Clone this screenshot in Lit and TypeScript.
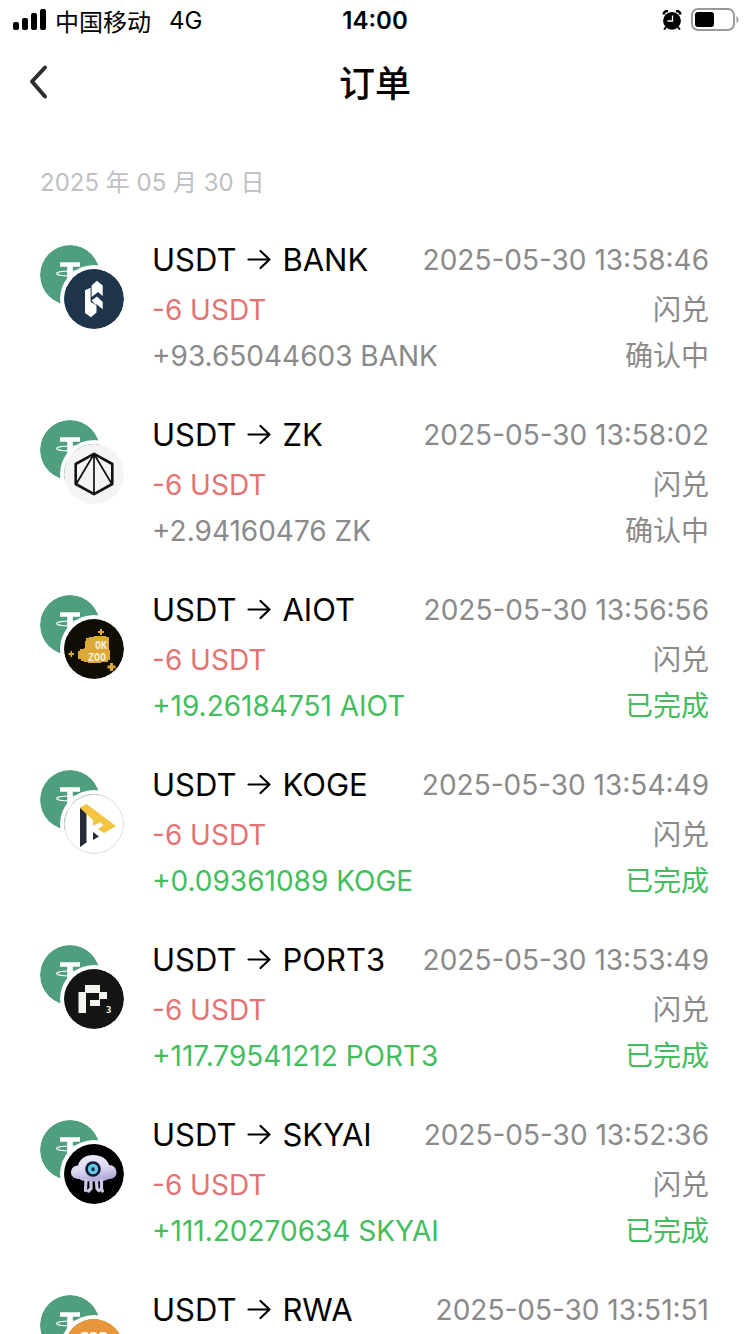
import { LitElement, html, css, svg } from 'lit';
import { customElement, property } from 'lit/decorators.js';

interface Order {
  token: string;
  time: string;
  received: string;
  done: boolean;
}

const orders: Order[] = [
  { token: 'BANK', time: '2025-05-30 13:58:46', received: '93.65044603', done: false },
  { token: 'ZK', time: '2025-05-30 13:58:02', received: '2.94160476', done: false },
  { token: 'AIOT', time: '2025-05-30 13:56:56', received: '19.26184751', done: true },
  { token: 'KOGE', time: '2025-05-30 13:54:49', received: '0.09361089', done: true },
  { token: 'PORT3', time: '2025-05-30 13:53:49', received: '117.79541212', done: true },
  { token: 'SKYAI', time: '2025-05-30 13:52:36', received: '111.20270634', done: true },
  { token: 'RWA', time: '2025-05-30 13:51:51', received: '', done: true },
];

const tokenArt: Record<string, unknown> = {
  BANK: svg`
    <circle cx="30" cy="30" r="30" fill="#1e354c"/>
    <path fill="#fff" d="M21 21.300l5.600-2.500V33l5.900 3.500v7L27 48.300 21 44z"/>
    <path fill="#fff" d="M27.600 16.500l5.400-4.800 5.700 4.800V27L34 23l-6.400 5z"/>
    <path fill="#fff" d="M27.600 31.500L33 27.500l5.700 5.500v7.200L33 35.500l-2 0z"/>`,
  ZK: svg`
    <circle cx="30" cy="30" r="30" fill="#f4f4f4"/>
    <path fill="none" stroke="#111" stroke-width="2.600" stroke-linejoin="round" d="M30 9.800l18.300 10.200v20L30 50.200 11.700 40V20z"/>
    <path fill="none" stroke="#111" stroke-width="1.700" d="M30 10v40M30 10L12.500 39.500M30 10l17.500 29.500"/>`,
  AIOT: svg`
    <circle cx="30" cy="30" r="30" fill="#100d05"/>
    <path fill="#dca836" d="M22 19h3v-1h5v-1h12v1h3v13h1v10h-2v2h-7v1H24v-1h-4v-1h-3v-2h-3v-8h2v-2h4v-1h1v-7h1z"/>
    <path fill="#dca836" d="M36 10h2v2h2v2h-2v2h-2v-2h-2v-2h2zM6.500 32h1.500v2h2v2h-2v2h-1.500v-2h-2v-2h2zM46 44h3v2.500h2.500v3H49V52h-3v-2.500h-2.500v-3H46z"/>
    <text class="pixel" x="31" y="30" font-size="10">OK</text>
    <text class="pixel" x="24" y="42" font-size="10">ZOO</text>`,
  KOGE: svg`
    <circle cx="30" cy="30" r="29.500" fill="#fff" stroke="#d8d8d8"/>
    <path fill="#262a33" d="M16 13.500l6.500 4v31L16 53zM29 38l6 4.500-6 3.500z"/>
    <path fill="#f3c43f" d="M16 13.500l6.500-3.500L52 32l-12 7-6-4 5.500-3.500-3-3-7.500 3v-5.500L16.500 14.500z"/>`,
  PORT3: svg`
    <circle cx="30" cy="30" r="30" fill="#141414"/>
    <path fill="#f3f5ee" d="M21 16h15v7h7v7h-7v7H26v-6h9v-7H22v20h-7.500V23H21z"/>
    <text class="pixel" x="42" y="44" font-size="9">3</text>`,
  SKYAI: svg`
    <defs>
      <linearGradient id="cloud" x1="0" y1="0" x2="0.300" y2="1">
        <stop offset="0" stop-color="#f1effb"/><stop offset="0.600" stop-color="#dcd9f3"/><stop offset="1" stop-color="#b3add9"/>
      </linearGradient>
    </defs>
    <circle cx="30" cy="30" r="30" fill="#000"/>
    <path fill="url(#cloud)" d="M14 21.500c1.500-6 7-10.500 15-10.500s14.500 4 16 10c4.500 0 7.500 3.500 7.500 7.500s-3 6.500-8 6.500c-3 2-8 2.500-15 2.500s-12-.5-14-2.500c-5 0-8.500-2.500-8.500-6.500s3-7 7-7z"/>
    <path fill="none" stroke="#cdc8ea" stroke-width="3.200" stroke-linecap="round" d="M22 36l-.5 10.500M27 38v6.500l-2.500 2.500M32.500 38l.5 6.500 2 2M37.500 36v9l1 2"/>
    <circle cx="29" cy="25" r="7.800" fill="#0d1b33"/>
    <circle cx="29" cy="25" r="5.200" fill="#63c7e6"/>
    <rect x="27.500" y="23.500" width="3" height="3.500" fill="#14304a"/>`,
  RWA: svg`
    <circle cx="30" cy="30" r="30" fill="#e8963c"/>
    <path fill="#fff" d="M14 22c0-6 3-9 7-9s4 2 4 9zM25 22c0-6 0-9 4-9s5 2 5 9zM35 22v-6c0-3 2-3 5-3s5 4 5 9z"/>`,
};

const tether = svg`
  <circle cx="30" cy="30" r="30" fill="#4f9f7f"/>
  <ellipse cx="30" cy="28.500" rx="13.500" ry="2.500" fill="none" stroke="#fff" stroke-width="1.100"/>
  <path fill="#fff" d="M20 17.300h20v4.400h-7.200V44h-5.600V21.700H20z"/>`;

@customElement('status-bar')
export class StatusBar extends LitElement {
  static styles = css`
    :host {
      display: grid;
      grid-template-columns: 1fr auto 1fr;
      align-items: center;
      height: 40px;
      padding: 0 12px;
      font-size: 24px;
      color: #000;
    }
    .carrier, .indicators { display: flex; align-items: center; }
    .signal { margin-right: 8px; }
    .network { margin-left: 18px; }
    .clock { font-weight: 600; }
    .indicators { justify-content: flex-end; gap: 9px; }
    .battery { margin-right: -2px; }
    svg { display: block; }
  `;

  render() {
    return html`
      <div class="carrier">
        <svg class="signal" width="35" height="22" viewBox="0 0 35 22" aria-hidden="true">
          <rect x="1" y="13" width="6" height="8" rx="2"/>
          <rect x="10" y="9" width="6" height="12" rx="2"/>
          <rect x="19" y="4" width="6" height="17" rx="2"/>
          <rect x="28" y="0" width="6" height="21" rx="2"/>
        </svg>
        <span>中国移动</span>
        <span class="network">4G</span>
      </div>
      <time class="clock">14:00</time>
      <div class="indicators">
        <svg width="20" height="20" viewBox="0 0 20 20" aria-hidden="true">
          <circle cx="10" cy="10.800" r="8.900"/>
          <path d="M4 17l-2 2.500M16 17l2 2.500" stroke="#000" stroke-width="2"/>
          <path d="M1.500 4.500A4 4 0 0 1 6 1M14 1a4 4 0 0 1 4.500 3.500" fill="none" stroke="#000" stroke-width="2.400"/>
          <path d="M10.500 5.500v5.500H5.500" fill="none" stroke="#fff" stroke-width="1.300"/>
        </svg>
        <svg class="battery" width="49" height="24" viewBox="0 0 49 24" aria-hidden="true">
          <rect x="1" y="1" width="42" height="21" rx="6" fill="none" stroke="#9a9a9a" stroke-width="2"/>
          <rect x="4" y="4" width="19" height="15" rx="3"/>
          <path d="M45.500 8v7q2-1 2-3.500t-2-3.500z" fill="#9a9a9a"/>
        </svg>
      </div>
    `;
  }
}

@customElement('order-row')
export class OrderRow extends LitElement {
  @property({ attribute: false }) order!: Order;

  static styles = css`
    :host { display: flex; gap: 28px; }
    .pair { display: grid; flex: none; width: 84px; height: 84px; margin-top: 12px; }
    .coin { grid-area: 1 / 1; width: 60px; height: 60px; border-radius: 50%; }
    .front { place-self: end; box-shadow: 0 0 0 4px #fff; }
    .pixel { font-family: 'DejaVu Sans Mono', monospace; font-weight: 700; fill: #f6f0dc; }
    .details { flex: 1; min-width: 0; }
    .line {
      display: flex;
      justify-content: space-between;
      align-items: center;
      font-size: 28px;
      line-height: 46px;
      color: #8a8a8a;
      white-space: nowrap;
    }
    .heading { line-height: 54px; }
    .swap {
      display: flex;
      align-items: center;
      gap: 11px;
      margin: 0;
      font-size: 31px;
      font-weight: 400;
      color: #000;
    }
    .spent { color: #e57373; }
    .done { color: #43bd5e; }
  `;

  render() {
    const { token, time, received, done } = this.order;
    const state = done ? 'done' : 'pending';
    return html`
      <div class="pair" aria-hidden="true">
        <svg class="coin" viewBox="0 0 60 60">${tether}</svg>
        <svg class="coin front" viewBox="0 0 60 60">${tokenArt[token]}</svg>
      </div>
      <div class="details">
        <div class="line heading">
          <h2 class="swap">
            <span>USDT</span>
            <svg width="24" height="24" viewBox="0 0 24 24" fill="none" stroke="#000" stroke-width="2.200" stroke-linecap="round" stroke-linejoin="round" role="img" aria-label="→">
              <path d="M1.500 11.500h21M13.500 3l9 8.500-9 8.500"/>
            </svg>
            <span>${token}</span>
          </h2>
          <time>${time}</time>
        </div>
        ${received
          ? html`
              <div class="line"><span class="spent">-6 USDT</span><span>闪兑</span></div>
              <div class="line">
                <span class=${state}>+${received} ${token}</span>
                <span class=${state}>${done ? '已完成' : '确认中'}</span>
              </div>
            `
          : null}
      </div>
    `;
  }
}

@customElement('app-root')
export class AppRoot extends LitElement {
  static styles = css`
    :host {
      display: flex;
      flex-direction: column;
      height: 100vh;
      overflow: hidden;
      background: #fff;
      font-family: Inter, 'Noto Sans CJK SC', sans-serif;
    }
    .nav {
      display: grid;
      grid-template-columns: 1fr auto 1fr;
      align-items: center;
      flex: none;
      height: 88px;
      padding: 0 24px;
    }
    .back {
      display: flex;
      justify-self: start;
      padding: 0;
      border: 0;
      background: none;
    }
    .title { margin: 0; font-size: 36px; line-height: 48px; font-weight: 500; }
    .orders {
      flex: 1;
      min-height: 0;
      overflow-y: auto;
      scrollbar-width: none;
      padding: 36px 41px 36px 40px;
    }
    .day { margin: 0 0 31px; font-size: 24px; line-height: 38px; font-weight: 400; color: #c0c0c4; }
    .list { display: grid; gap: 29px; margin: 0; padding: 0; list-style: none; }
  `;

  render() {
    return html`
      <status-bar></status-bar>
      <header class="nav">
        <button class="back" aria-label="返回">
          <svg width="28" height="40" viewBox="0 0 28 40" fill="none" stroke="#2b2d2f" stroke-width="4" stroke-linecap="round" stroke-linejoin="round">
            <path d="M21 3.500L8 17.500l13 15"/>
          </svg>
        </button>
        <h1 class="title">订单</h1>
      </header>
      <main class="orders">
        <p class="day">2025 年 05 月 30 日</p>
        <ul class="list">
          ${orders.map((order) => html`<li><order-row .order=${order}></order-row></li>`)}
        </ul>
      </main>
    `;
  }
}
